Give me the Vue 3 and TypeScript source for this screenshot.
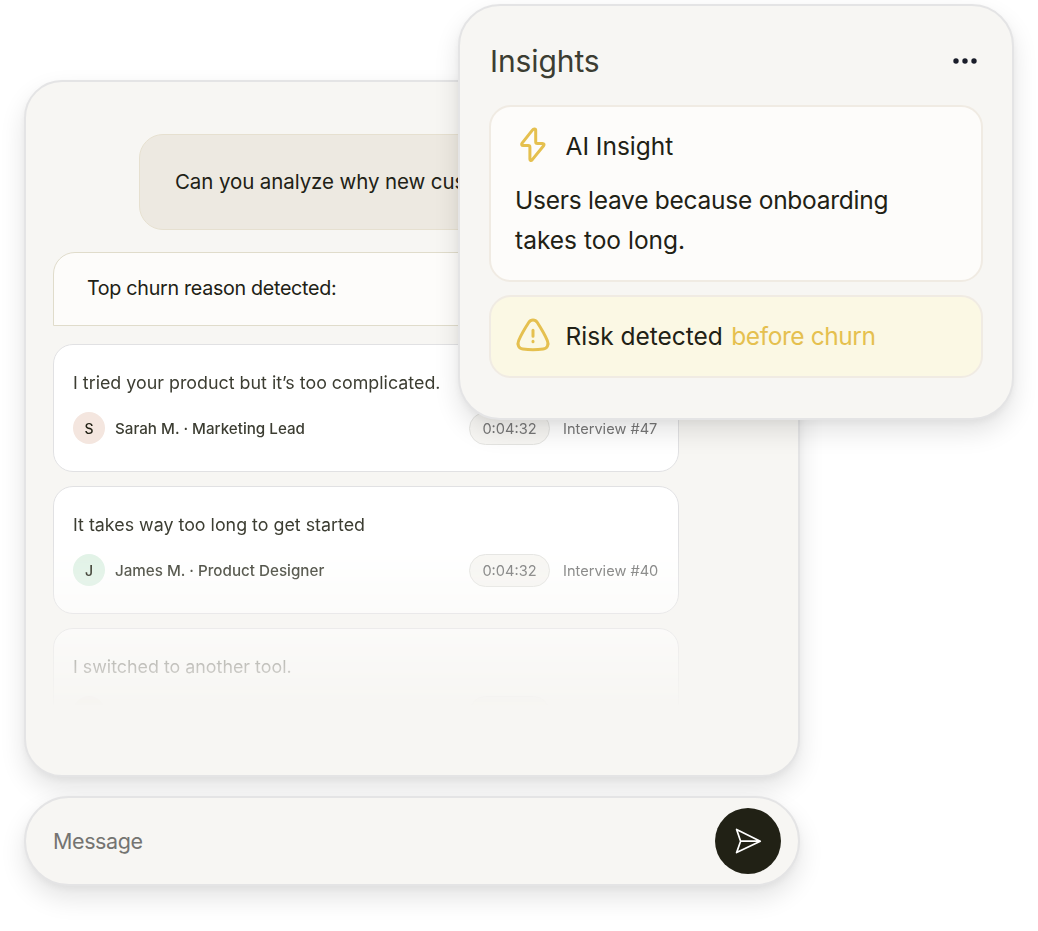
<script setup lang="ts">
interface Quote {
  text: string
  initial: string
  author: string
  time: string
  source: string
  tone: string
}

const quotes: Quote[] = [
  { text: 'I tried your product but it’s too complicated.', initial: 'S', author: 'Sarah M. · Marketing Lead', time: '0:04:32', source: 'Interview #47', tone: 'peach' },
  { text: 'It takes way too long to get started', initial: 'J', author: 'James M. · Product Designer', time: '0:04:32', source: 'Interview #40', tone: 'mint' },
  { text: 'I switched to another tool.', initial: '', author: '', time: '', source: '', tone: 'sand' },
]
</script>

<template>
  <main class="stage">
    <section class="chat">
      <div class="question"><span>Can you analyze why new customers churn?</span></div>
      <div class="answer"><span>Top churn reason detected:</span></div>
      <div class="quotes">
        <article v-for="q in quotes" :key="q.text" class="quote">
          <p class="quote-text">{{ q.text }}</p>
          <div class="meta">
            <span class="avatar" :class="q.tone">{{ q.initial }}</span>
            <span class="author">{{ q.author }}</span>
            <span class="time">{{ q.time }}</span>
            <span class="source">{{ q.source }}</span>
          </div>
        </article>
      </div>
    </section>

    <section class="composer">
      <span class="placeholder">Message</span>
      <button class="send" aria-label="Send">
        <svg width="66" height="66" viewBox="0 0 66 66" fill="none" stroke="#fff" stroke-width="1.7" stroke-linejoin="round" stroke-linecap="round">
          <path d="M21.6 21.4 45.3 33.2 21.6 44.6 25.6 33.2ZM25.6 33.2H45" />
        </svg>
      </button>
    </section>

    <aside class="insights">
      <header class="head">
        <h2>Insights</h2>
        <svg class="dots" width="24" height="6" viewBox="0 0 24 6" fill="#1a1d29">
          <circle cx="3" cy="3" r="2.7" /><circle cx="12" cy="3" r="2.7" /><circle cx="21" cy="3" r="2.7" />
        </svg>
      </header>
      <div class="card">
        <div class="row">
          <svg class="bolt" width="36" height="36" viewBox="0 0 36 36" fill="none" stroke="#e5c04f" stroke-width="3" stroke-linejoin="round" stroke-linecap="round">
            <path d="M17.2 3.3 7.1 16.2C6.2 17.4 6.7 18.5 8.1 18.5H13.2C14.3 18.5 14.9 19.1 14.9 20.2V32.3C14.9 33.6 16.2 33.9 17.1 32.9L28.6 18.8C29.5 17.6 29 16.4 27.5 16.4H22.4C21.3 16.4 20.7 15.8 20.7 14.7V3.4C20.7 1.8 18.5 1.6 17.2 3.3Z" />
          </svg>
          <span class="label">AI Insight</span>
        </div>
        <p class="body"><span class="first">Users leave because onboarding</span><br>takes too long.</p>
      </div>
      <div class="card risk">
        <div class="row">
          <svg width="36" height="36" viewBox="0 0 36 36" fill="none" stroke="#e5c04f" stroke-width="3" stroke-linejoin="round" stroke-linecap="round">
            <path d="M13.7 5.5C15.8 2.2 20.2 2.2 22.3 5.5C26 11.2 29.9 17.8 32.3 23.5C34.1 27.6 32.3 31.4 28.2 32C21.5 32.9 14.5 32.9 7.8 32C3.7 31.4 1.9 27.6 3.7 23.5C6.1 17.8 10 11.2 13.7 5.5Z" />
            <path d="M18 13.2V19.2M18 24.2V24.8" />
          </svg>
          <span class="label">Risk detected <em>before churn</em></span>
        </div>
      </div>
    </aside>
  </main>
</template>

<style>
body { background: #fff; }
</style>

<style scoped>
* { box-sizing: border-box; }
.stage {
  position: relative;
  width: 1038px;
  height: 931px;
  padding: 80px 0 0 24px;
  overflow: hidden;
  font-family: Inter, "Liberation Sans", sans-serif;
  color: #212115;
}
.chat, .composer, .insights {
  background: #f7f6f3;
  border: 2px solid #e4e4e5;
  box-shadow: 0 12px 26px rgba(0, 0, 0, .11), 0 3px 6px rgba(0, 0, 0, .04);
}
.chat {
  width: 776px;
  height: 697px;
  padding: 52px 0 0 27px;
  border-radius: 38px;
  overflow: hidden;
}
.question {
  height: 96px;
  width: 580px;
  margin-left: 86px;
  padding: 0 0 2px 35px;
  display: flex;
  align-items: center;
  border: 1px solid #e6e0d0;
  border-radius: 24px;
  background: #ede9e1;
  font-size: 20.5px;
  white-space: nowrap;
  letter-spacing: -.1px;
}
.answer {
  height: 74px;
  width: 626px;
  margin-top: 22px;
  padding: 0 0 2px 33px;
  display: flex;
  align-items: center;
  border: 1px solid #e0dccb;
  border-radius: 22px 22px 0 0;
  background: #fdfcfa;
  font-size: 19.7px;
  letter-spacing: -.3px;
}
.quotes {
  width: 626px;
  height: 361px;
  margin-top: 18px;
  display: flex;
  flex-direction: column;
  gap: 14px;
  overflow: hidden;
  mask-image: linear-gradient(#000 200px, transparent 368px);
}
.quote {
  flex: none;
  height: 128px;
  padding: 25px 20px 0 19px;
  border: 1px solid #e1e1e3;
  border-radius: 20px;
  background: #fff;
  color: #3c3d32;
}
.quote-text { margin: 0; font-size: 17.85px; line-height: 26px; }
.meta { display: flex; align-items: center; height: 32px; margin-top: 16px; font-size: 14.6px; }
.avatar {
  width: 32px;
  height: 32px;
  border-radius: 50%;
  display: grid;
  place-items: center;
  font-size: 14px;
  font-weight: 500;
  color: #212115;
}
.peach { background: #f4e6df; }
.mint { background: #e0f2e6; }
.sand { background: #eeeae3; }
.author { margin-left: 10px; font-size: 15.2px; font-weight: 500; }
.time {
  width: 81px;
  height: 33px;
  padding-top: 2px;
  margin-left: auto;
  display: grid;
  place-items: center;
  border: 1px solid #e4e4e1;
  border-radius: 17px;
  background: #f7f6f3;
  color: #777;
}
.source { width: 95px; margin-left: 13px; padding-top: 1px; color: #777; white-space: nowrap; }
.composer {
  width: 776px;
  height: 90px;
  margin-top: 19px;
  padding: 0 17px 0 27px;
  border-radius: 45px;
  display: flex;
  align-items: center;
  justify-content: space-between;
}
.placeholder { font-size: 21.5px; letter-spacing: -.4px; color: #747471; }
.send { width: 66px; height: 66px; padding: 0; border: 0; border-radius: 50%; background: #212115; }
.send svg { display: block; }
.insights {
  position: absolute;
  left: 458px;
  top: 4px;
  width: 556px;
  height: 416px;
  padding: 0 29px;
  border-radius: 42px;
}
.head { height: 99px; display: flex; justify-content: space-between; padding: 35px 6px 0 1px; }
h2 { margin: 0; font-size: 30px; line-height: 40px; font-weight: 400; letter-spacing: -.1px; color: #3c3d32; }
.dots { margin-top: 17px; }
.card { height: 177px; padding: 19px 24px; border: 2px solid #f0ebe3; border-radius: 22px; background: #fdfcfa; }
.row { display: flex; align-items: center; height: 37px; gap: 14.5px; }
.label { padding-top: 2px; font-size: 24.5px; white-space: nowrap; }
.body { margin: 17px 0 0; font-size: 24.5px; line-height: 40px; white-space: nowrap; }
.first { letter-spacing: -.25px; }
.risk { height: 83px; margin-top: 13px; background: #fbf8e4; }
em { margin-left: 1.5px; font-style: normal; letter-spacing: -.42px; color: #e5c04f; }
</style>
